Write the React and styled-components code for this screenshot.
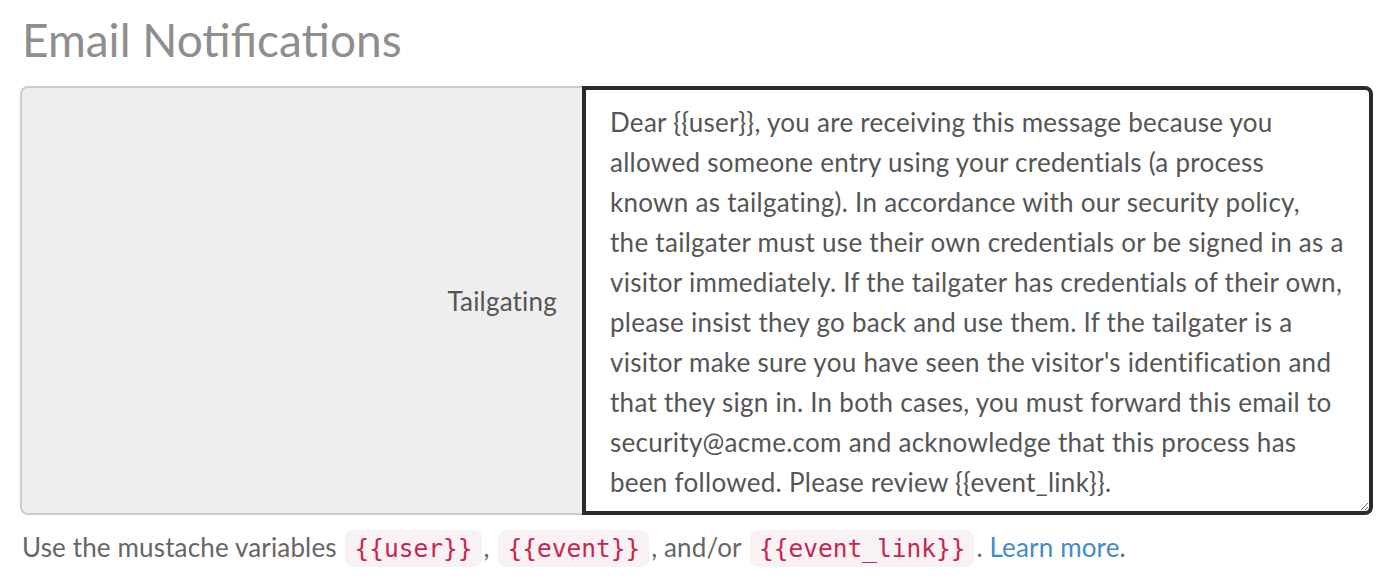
import React from "react";
import styled, { createGlobalStyle } from "styled-components";

const Global = createGlobalStyle`
  html, body { margin: 0; padding: 0; background: #fff; }
  body { font-family: Lato, "Noto Sans", sans-serif; }
`;

const Page = styled.div`
  padding: 10px 25px 0 20px;
  width: 1353px;
`;

const Heading = styled.h2`
  margin: 0 0 16px 0;
  font-family: Lato, sans-serif;
  font-weight: 400;
  font-size: 46px;
  line-height: 60px;
  color: #8e8e8e;
  padding-left: 2px;
`;

const InputGroup = styled.div`
  display: flex;
  height: 429px;
`;

const Addon = styled.label`
  box-sizing: border-box;
  width: 562px;
  flex: none;
  display: flex;
  align-items: center;
  justify-content: flex-end;
  padding-right: 25px;
  background: #eeeeee;
  border: 2px solid #cccccc;
  border-right: none;
  border-radius: 8px 0 0 8px;
  font-family: Lato, sans-serif;
  font-size: 26px;
  letter-spacing: 0.2px;
  color: #555;
`;

const TextArea = styled.textarea`
  box-sizing: border-box;
  flex: 1;
  margin: 0;
  border: 4px solid #2b2b2b;
  border-radius: 0 8px 8px 0;
  padding: 12px 10px 8px 24px;
  font-family: Lato, sans-serif;
  font-size: 26px;
  letter-spacing: 0.28px;
  line-height: 40px;
  color: #555;
  background: #fff;
  outline: none;
  resize: vertical;
  white-space: pre;
  overflow: hidden;
`;

const Help = styled.p`
  margin: 12px 0 0 2px;
  font-family: Lato, sans-serif;
  font-size: 26px;
  letter-spacing: 0.15px;
  line-height: 40px;
  color: #666;
`;

const Code = styled.code`
  font-family: "DejaVu Sans Mono", monospace;
  font-size: 24.5px;
  letter-spacing: 0;
  color: #c7254e;
  background: #f9f2f4;
  border-radius: 8px;
  padding: 4px 9px;
  margin: 0 2px;
`;

const Link = styled.a`
  color: #428bca;
  text-decoration: none;
`;

const message = [
  "Dear {{user}}, you are receiving this message because you",
  "allowed someone entry using your credentials (a process",
  "known as tailgating). In accordance with our security policy,",
  "the tailgater must use their own credentials or be signed in as a",
  "visitor immediately. If the tailgater has credentials of their own,",
  "please insist they go back and use them. If the tailgater is a",
  "visitor make sure you have seen the visitor's identification and",
  "that they sign in. In both cases, you must forward this email to",
  "security@acme.com and acknowledge that this process has",
  "been followed. Please review {{event_link}}.",
].join("\n");

export default function App() {
  return (
    <>
      <Global />
      <Page>
        <Heading>Email Notifications</Heading>
        <InputGroup>
          <Addon htmlFor="tailgating">Tailgating</Addon>
          <TextArea id="tailgating" defaultValue={message} />
        </InputGroup>
        <Help>
          Use the mustache variables <Code>{"{{user}}"}</Code>,{" "}
          <Code>{"{{event}}"}</Code>, and/or <Code>{"{{event_link}}"}</Code>.{" "}
          <Link href="#">Learn more</Link>.
        </Help>
      </Page>
    </>
  );
}
